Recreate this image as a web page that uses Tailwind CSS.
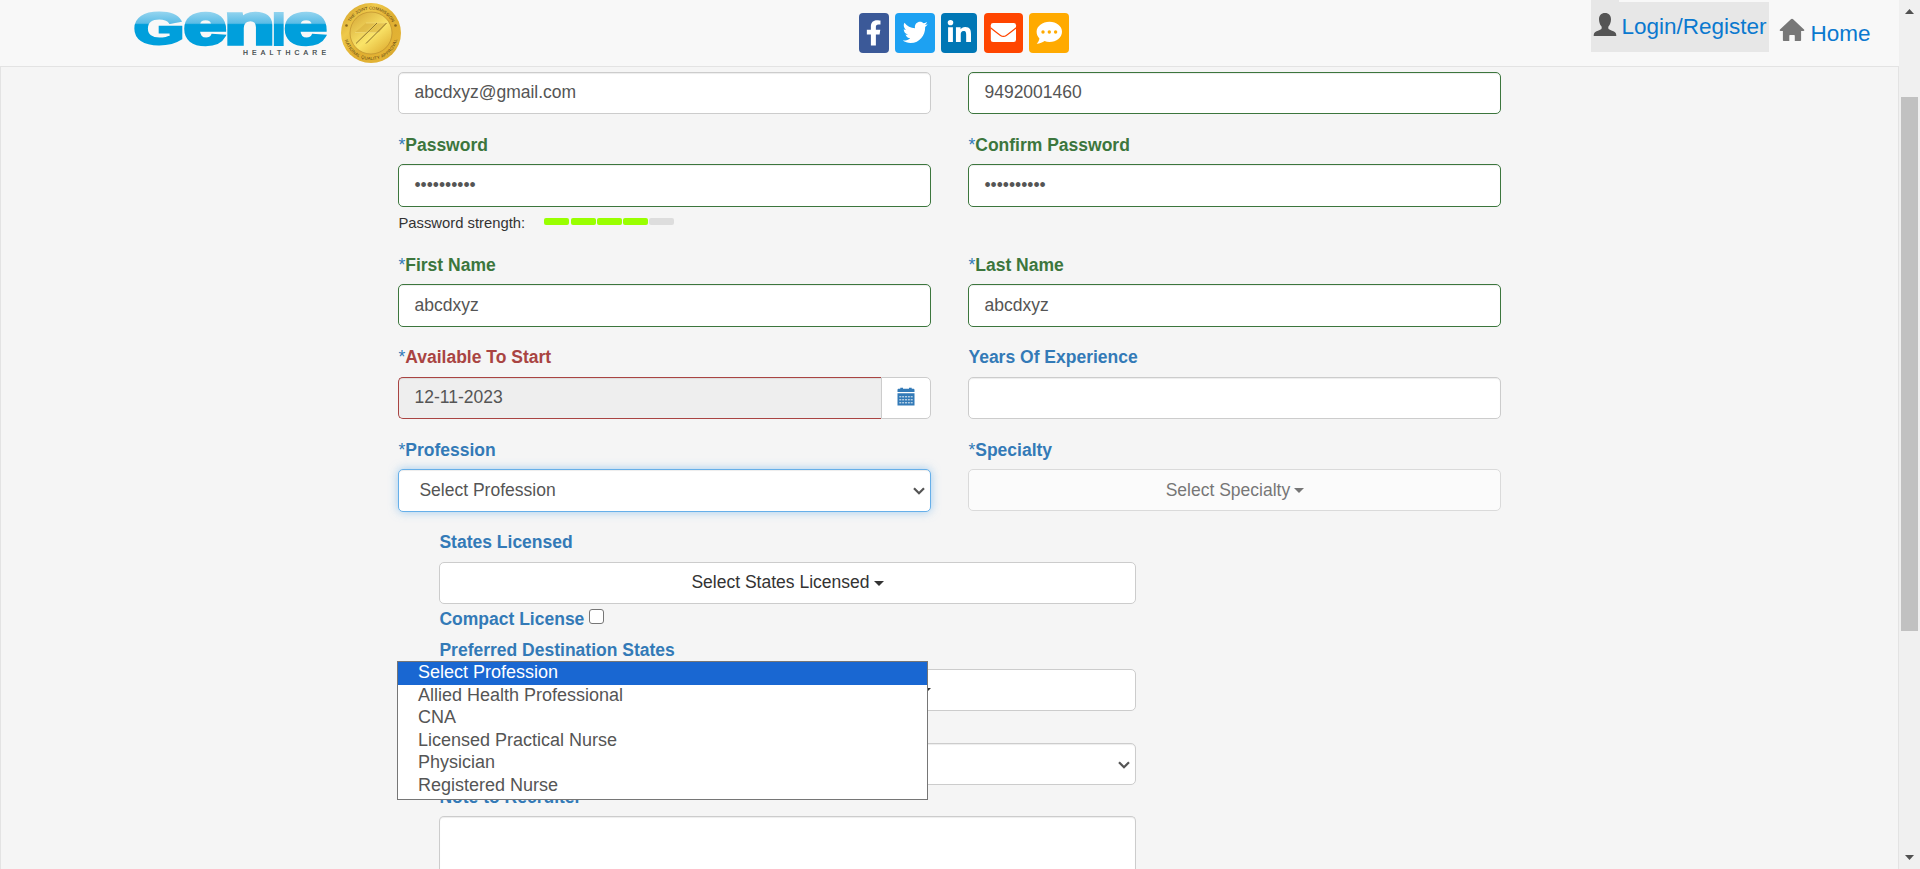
<!DOCTYPE html>
<html lang="en">
<head>
<meta charset="utf-8">
<title>Genie Healthcare</title>
<script src="https://cdn.jsdelivr.net/npm/@tailwindcss/browser@4"></script>
</head>
<body class="h-[869px] overflow-hidden bg-[#f5f5f5] font-['Liberation_Sans',Arial,sans-serif] text-[17.5px] leading-[25px] text-[#333]">
<div class="relative flex h-[869px] w-[1920px]">
  <div class="flex w-[1899px] flex-col">
    <!-- top bar -->
    <header class="flex h-[66px] shrink-0 items-start bg-[#f8f8f8]">
      <div class="flex w-[859px] items-start pl-[134px]">
        <svg class="mt-[10px] h-[50px] w-[196px] overflow-visible" viewBox="134 10 196 50" role="img" aria-label="Genie Healthcare">
          <defs>
            <linearGradient id="blue" gradientUnits="userSpaceOnUse" x1="0" y1="12" x2="0" y2="46">
              <stop offset="0" stop-color="#93d4ef"/><stop offset=".33" stop-color="#5bbce6"/>
              <stop offset=".37" stop-color="#009fdc"/><stop offset="1" stop-color="#009fdc"/>
            </linearGradient>
            <!-- same ramp for the lower-case letters, which are stretched 1.32 times from y = 45 -->
            <linearGradient id="blueTall" gradientUnits="userSpaceOnUse" x1="0" y1="20" x2="0" y2="45.800">
              <stop offset="0" stop-color="#93d4ef"/><stop offset=".33" stop-color="#5bbce6"/>
              <stop offset=".37" stop-color="#009fdc"/><stop offset="1" stop-color="#009fdc"/>
            </linearGradient>
          </defs>
          <g font-family="Liberation Sans" font-weight="700" stroke-linejoin="miter">
            <text x="133.800" y="44.300" font-size="44" textLength="50.500" lengthAdjust="spacingAndGlyphs" fill="url(#blue)" stroke="url(#blue)" stroke-width="2.800">G</text>
            <g transform="translate(0 45) scale(1 1.32) translate(0 -45)" font-size="44" fill="url(#blueTall)" stroke="url(#blueTall)" stroke-width="2.600">
              <text x="183.500" y="44" textLength="43" lengthAdjust="spacingAndGlyphs">e</text>
              <text x="224" y="44.300" textLength="51" lengthAdjust="spacingAndGlyphs">n</text>
              <text x="284" y="44" textLength="43" lengthAdjust="spacingAndGlyphs">e</text>
            </g>
            <text x="271.500" y="44.700" font-size="45.500" textLength="14.500" lengthAdjust="spacingAndGlyphs" fill="url(#blue)" stroke="url(#blue)" stroke-width="2">I</text>
          </g>
          <text x="243" y="54.700" font-family="Liberation Sans" font-size="6.800" textLength="83" lengthAdjust="spacing" fill="#333c40" stroke="#333c40" stroke-width=".2">HEALTHCARE</text>
        </svg>
        <svg class="ml-[10px] mt-[2px] size-[62px]" viewBox="-31 -31 62 62" role="img" aria-label="The Joint Commission National Quality Approval">
          <defs>
            <linearGradient id="rim" x1="0" y1="0" x2="1" y2="1">
              <stop offset="0" stop-color="#cf9c25"/><stop offset=".3" stop-color="#efc94a"/><stop offset=".55" stop-color="#dfae30"/><stop offset=".8" stop-color="#e3b335"/><stop offset="1" stop-color="#c08a1c"/>
            </linearGradient>
            <linearGradient id="face" x1="0" y1="0" x2=".8" y2="1">
              <stop offset="0" stop-color="#d3a333"/><stop offset=".6" stop-color="#fae468"/><stop offset="1" stop-color="#e0b034"/>
            </linearGradient>
            <path id="arcTop" d="M-23.500 0A23.500 23.500 0 0 1 23.500 0"/>
            <path id="arcBottom" d="M-27 0A27 27 0 0 0 27 0"/>
          </defs>
          <circle r="30" fill="url(#rim)"/>
          <circle r="21" fill="url(#face)" stroke="#b5872a" stroke-width=".6"/>
          <path d="M-5-10H4.500L-5.500-.5H-16ZM7-10H16L8-.5H-3Z" fill="#d2a638" opacity=".45"/>
          <path d="M-5-10H17M-16-.5H8" stroke="#f0d873" stroke-width=".8"/>
          <path d="M-15 10.500L6-10M-5 10.500L15.500-10" stroke="#6e5420" stroke-width=".8" fill="none"/>
          <g font-family="Liberation Sans" font-size="4.300" fill="#5c4312">
            <text><textPath href="#arcTop" startOffset="11.500" textLength="51">THE JOINT COMMISSION</textPath></text>
            <text><textPath href="#arcBottom" startOffset="7" textLength="71">NATIONAL QUALITY APPROVAL</textPath></text>
          </g>
          <g fill="#8a661c"><circle cx="-24.500" cy="-7.500" r="1.300"/><circle cx="24.500" cy="-7.500" r="1.300"/></g>
        </svg>
      </div>
      <nav class="flex items-start pt-[13px]" aria-label="Social">
        <svg class="mr-[6px] h-10 w-[30px] rounded-[4px] bg-[#3b5998]" viewBox="0 0 30 40" fill="#fff"><path transform="translate(6.700 7.200) scale(.0498 .0494)" d="M279.140 288l14.220-92.660h-88.910v-60.130c0-25.350 12.420-50.060 52.240-50.060h40.420V6.260S260.430 0 225.360 0c-73.220 0-121.080 44.380-121.080 124.720v70.620H22.890V288h81.390v224h100.170V288z"/></svg>
        <svg class="mr-[6px] h-10 w-10 rounded-[4px] bg-[#1da1f2]" viewBox="0 0 40 40" fill="#fff"><path transform="translate(7.700 6.200) scale(.0488 .0512)" d="M459.370 151.716c.325 4.548.325 9.097.325 13.645 0 138.720-105.583 298.558-298.558 298.558-59.452 0-114.680-17.219-161.137-47.106 8.447.974 16.568 1.299 25.340 1.299 49.055 0 94.213-16.568 130.274-44.832-46.132-.975-84.792-31.188-98.112-72.772 6.498.974 12.995 1.624 19.818 1.624 9.421 0 18.843-1.300 27.614-3.573-48.081-9.747-84.143-51.980-84.143-102.985v-1.299c13.969 7.797 30.214 12.670 47.431 13.319-28.264-18.843-46.781-51.005-46.781-87.391 0-19.492 5.197-37.360 14.294-52.954 51.655 63.675 129.300 105.258 216.365 109.807-1.624-7.797-2.599-15.918-2.599-24.040 0-57.828 46.782-104.934 104.934-104.934 30.213 0 57.502 12.670 76.670 33.137 23.715-4.548 46.456-13.320 66.599-25.340-7.798 24.366-24.366 44.833-46.132 57.827 21.117-2.273 41.584-8.122 60.426-16.243-14.292 20.791-32.161 39.308-52.628 54.253z"/></svg>
        <svg class="mr-[7px] h-10 w-9 rounded-[4px] bg-[#0077b5]" viewBox="0 0 36 40" fill="#fff"><path transform="translate(6.700 7) scale(.052 .049)" d="M100.280 448H7.400V148.900h92.880zM53.790 108.100C24.090 108.100 0 83.500 0 53.800a53.790 53.790 0 0 1 107.580 0c0 29.700-24.100 54.300-53.790 54.300zM447.900 448h-92.680V302.400c0-34.700-.7-79.200-48.290-79.200-48.290 0-55.690 37.700-55.690 76.700V448h-92.780V148.900h89.080v40.800h1.300c12.400-23.500 42.690-48.300 87.880-48.300 94 0 111.280 61.900 111.280 142.300V448z"/></svg>
        <svg class="mr-[6px] h-10 w-[39px] rounded-[4px] bg-[#ff4500]" viewBox="0 0 39 40"><rect x="6.800" y="10" width="25.200" height="19" rx="2.300" fill="#fff"/><path d="M6.500 14.800C10 17.700 13.500 20.300 16.500 22.400c2 1.400 3.800 1.400 5.800 0 3-2.100 6.500-4.700 10-7.600" fill="none" stroke="#ff4500" stroke-width="1.200"/></svg>
        <svg class="h-10 w-10 rounded-[4px] bg-[#ffaa00]" viewBox="0 0 40 40"><path d="M20.500 8.700c7 0 12.500 4.500 12.500 10s-5.500 10.200-12.500 10.200c-1.800 0-3.500-.3-5-.9-1.900 1.400-4.600 2.700-7.800 2.700 1.500-1.700 2.500-3.600 2.700-5.300C8.800 23.600 7.600 21.300 7.600 18.700c0-5.500 5.900-10 12.900-10z" fill="#fff"/><g fill="#ffaa00"><circle cx="14" cy="19" r="1.700"/><circle cx="20.300" cy="19" r="1.700"/><circle cx="26.600" cy="19" r="1.700"/></g></svg>
      </nav>
      <nav class="ml-auto flex items-start pr-[28.5px] text-[22.5px] text-[#0b79cf]">
        <div class="h-[52px] w-7 bg-[#e7e7e7] pl-[2px] pt-3">
          <svg class="h-6 w-6" viewBox="0 0 24 24" fill="#555"><path d="M12 1c3.800 0 6.100 2.600 6 6.500-.1 2.700-.9 5.100-2.400 6.800-.5.6-.5 2.600.3 3 2 1.100 4.300 1.700 5.800 2.700 1.200.8 1.600 2.200 1.600 4H.7c0-1.800.4-3.200 1.600-4 1.500-1 3.800-1.600 5.800-2.700.8-.4.8-2.400.3-3C6.900 12.600 6.100 10.200 6 7.500 5.900 3.600 8.200 1 12 1z"/></svg>
        </div>
        <a class="mt-[2px] h-[50px] w-[150px] bg-[#e7e7e7] pl-[2px] pt-[13px] leading-[23px]">Login/Register</a>
        <svg class="ml-[10px] mt-[18px] h-6 w-[26px]" viewBox="0 0 26 24" fill="#777"><path d="M13 .8c.4 0 .8.200 1.100.5L25 11.600c.6.600.3 1.400-.5 1.400h-2.400v9c0 .7-.4 1.100-1.100 1.100h-5.200V18c0-.7-.3-1-1-1h-3.500c-.7 0-1 .3-1 1v5.100H5c-.7 0-1.100-.4-1.100-1.100v-9H1.500c-.8 0-1.100-.8-.5-1.400L11.900 1.300c.3-.3.7-.5 1.100-.5z"/></svg>
        <a class="ml-[5px] mt-[22px] leading-[23px]">Home</a>
      </nav>
    </header>

    <!-- registration form -->
    <main class="flex h-[803px] flex-col border-x border-t border-[#e3e3e3] pl-[397.45px] pt-[5px]">
      <div class="grid w-[1103px] grid-cols-2 gap-x-[37px]">
        <div class="h-[42px] rounded-[5px] border border-[#ccc] bg-white px-[15px] pt-[7px] text-[#555] shadow-[inset_0_1px_1px_rgba(0,0,0,.075)]">abcdxyz@gmail.com</div>
        <div class="h-[42px] rounded-[5px] border border-[#3c763d] bg-white px-[15px] pt-[7px] text-[#555] shadow-[inset_0_1px_1px_rgba(0,0,0,.075)]">9492001460</div>
      </div>

      <div class="mt-[19px] grid h-[120px] w-[1103px] shrink-0 grid-cols-2 gap-x-[37px]">
        <div>
          <div class="font-bold text-[#3c763d]"><span class="font-normal text-[#337ab7]">*</span>Password</div>
          <div class="mt-[6px] h-[43px] rounded-[5px] border border-[#3c763d] bg-white px-[15px] pt-2 text-[#555] shadow-[inset_0_1px_1px_rgba(0,0,0,.075)]">••••••••••</div>
          <div class="flex text-[14.8px] leading-[21px]">
            <span class="w-[145.6px] pt-[6px]">Password strength:</span>
            <div class="flex gap-px pt-[11px]">
              <i class="h-[7px] w-[25px] rounded-[2px] bg-[#9f0]"></i>
              <i class="ml-px h-[7px] w-[25px] rounded-[2px] bg-[#9f0]"></i>
              <i class="h-[7px] w-[25px] rounded-[2px] bg-[#9f0]"></i>
              <i class="h-[7px] w-[25px] rounded-[2px] bg-[#9f0]"></i>
              <i class="h-[7px] w-[25px] rounded-[2px] bg-[#ddd]"></i>
            </div>
          </div>
        </div>
        <div>
          <div class="font-bold text-[#3c763d]"><span class="font-normal text-[#337ab7]">*</span>Confirm Password</div>
          <div class="mt-[6px] h-[43px] rounded-[5px] border border-[#3c763d] bg-white px-[15px] pt-2 text-[#555] shadow-[inset_0_1px_1px_rgba(0,0,0,.075)]">••••••••••</div>
        </div>
      </div>

      <div class="grid h-[92px] w-[1103px] shrink-0 grid-cols-2 gap-x-[37px]">
        <div>
          <div class="font-bold text-[#3c763d]"><span class="font-normal text-[#337ab7]">*</span>First Name</div>
          <div class="mt-[6px] h-[43px] rounded-[5px] border border-[#3c763d] bg-white px-[15px] pt-2 text-[#555] shadow-[inset_0_1px_1px_rgba(0,0,0,.075)]">abcdxyz</div>
        </div>
        <div>
          <div class="font-bold text-[#3c763d]"><span class="font-normal text-[#337ab7]">*</span>Last Name</div>
          <div class="mt-[6px] h-[43px] rounded-[5px] border border-[#3c763d] bg-white px-[15px] pt-2 text-[#555] shadow-[inset_0_1px_1px_rgba(0,0,0,.075)]">abcdxyz</div>
        </div>
      </div>

      <div class="grid h-[93px] w-[1103px] shrink-0 grid-cols-2 gap-x-[37px]">
        <div>
          <div class="font-bold text-[#a94442]"><span class="font-normal text-[#337ab7]">*</span>Available To Start</div>
          <div class="mt-[7px] flex h-[42px]">
            <div class="w-[483px] rounded-l-[5px] border border-r-0 border-[#a94442] bg-[#eee] px-[15px] pt-[7px] text-[#555] shadow-[inset_0_1px_1px_rgba(0,0,0,.075)]">12-11-2023</div>
            <div class="flex w-[50px] justify-center rounded-r-[5px] border border-[#ccc] bg-white pt-[9px]">
              <svg class="h-[19px] w-[18px]" viewBox="0 0 18 19"><path d="M.5 5V3c0-.8.500-1.300 1.300-1.300h1.500V.7h2.700v1h6V.7h2.700v1h1.500c.8 0 1.300.5 1.300 1.300v2zM.5 6.300h17v12.200h-17z" fill="#337ab7"/><path d="M2.300 9.800h13.500M2.300 12.800h13.500M2.300 15.800h13.500" stroke="#fff" stroke-width=".9" stroke-dasharray="2 .85"/></svg>
            </div>
          </div>
        </div>
        <div>
          <div class="font-bold text-[#337ab7]">Years Of Experience</div>
          <div class="mt-[7px] h-[42px] rounded-[5px] border border-[#ccc] bg-white shadow-[inset_0_1px_1px_rgba(0,0,0,.075)]"></div>
        </div>
      </div>

      <div class="grid h-[92px] w-[1103px] shrink-0 grid-cols-2 gap-x-[37px]">
        <div>
          <div class="font-bold text-[#337ab7]"><span class="font-normal">*</span>Profession</div>
          <div class="mt-[6px] flex h-[43px] justify-between rounded-[5px] border border-[#66afe9] bg-white pl-5 pr-[5px] pt-2 text-[#555] shadow-[inset_0_1px_1px_rgba(0,0,0,.075),0_0_10px_rgba(102,175,233,.6)]">
            <span>Select Profession</span>
            <svg class="mt-[9px] h-2 w-[12px]" viewBox="0 0 12 8" fill="none" stroke="#555" stroke-width="2.200"><path d="M1 1.200L6 6.300l5-5.100"/></svg>
          </div>
        </div>
        <div>
          <div class="font-bold text-[#337ab7]"><span class="font-normal">*</span>Specialty</div>
          <div class="mt-[6px] flex h-[42px] justify-center rounded-[5px] border border-[#ccc] bg-white pt-2 opacity-65">
            <span>Select Specialty</span><span class="ml-[4px] mt-[10px] h-0 border-x-[5px] border-t-[5px] border-x-transparent border-t-[#333]"></span>
          </div>
        </div>
      </div>

      <div class="ml-[41px] flex w-[697px] flex-col">
        <div class="font-bold text-[#337ab7]">States Licensed</div>
        <div class="mt-[7px] flex h-[42px] justify-center rounded-[5px] border border-[#ccc] bg-white pt-[7px]">
          <span>Select States Licensed</span><span class="ml-[5px] mt-[11px] h-0 border-x-[5px] border-t-[5px] border-x-transparent border-t-[#333]"></span>
        </div>
        <div class="mt-[3px] flex h-[31px] font-bold text-[#337ab7]"><span>Compact License</span><span class="ml-[5px] mt-[2px] size-[15px] rounded-[3px] border border-[#767676] bg-white"></span></div>
        <div class="h-[31px] font-bold text-[#337ab7]">Preferred Destination States</div>
        <div class="flex h-[42px] justify-center rounded-[5px] border border-[#ccc] bg-white pr-[2px] pt-[7px]">
          <span>Select Preferred Destination States</span><span class="ml-[4px] mt-[11px] h-0 border-x-[5px] border-t-[5px] border-x-transparent border-t-[#333]"></span>
        </div>
        <div class="mt-8 flex h-[42px] justify-end rounded-[5px] border border-[#ccc] bg-white pr-[5px] pt-[17px] shadow-[inset_0_1px_1px_rgba(0,0,0,.075)]">
          <svg class="h-2 w-[12px]" viewBox="0 0 12 8" fill="none" stroke="#555" stroke-width="2.200"><path d="M1 1.200L6 6.300l5-5.100"/></svg>
        </div>
        <div class="h-[31px] font-bold text-[#337ab7]">Note to Recruiter</div>
        <div class="h-[53px] rounded-t-[5px] border border-b-0 border-[#ccc] bg-white shadow-[inset_0_1px_1px_rgba(0,0,0,.075)]"></div>
      </div>
    </main>
  </div>

  <!-- page scrollbar -->
  <div class="flex h-[869px] w-[21px] flex-col items-center bg-[#f0f0f0]">
    <svg class="mt-[9px] h-[5px] w-[9px]" viewBox="0 0 9 5" fill="#505050"><path d="M0 5L4.500 0 9 5z"/></svg>
    <div class="mt-[83px] h-[534px] w-[17px] bg-[#c1c1c1]"></div>
    <svg class="mt-[224px] h-[5px] w-[9px]" viewBox="0 0 9 5" fill="#505050"><path d="M0 0L4.500 5 9 0z"/></svg>
  </div>

  <!-- open list of the profession select -->
  <ul class="absolute left-[397px] top-[661px] h-[139px] w-[531px] border border-[#767676] bg-white text-[18px] leading-[20px] text-[#555]">
    <li class="h-[23px] bg-[#1967d2] pl-5 text-white">Select Profession</li>
    <li class="h-[22px] pl-5">Allied Health Professional</li>
    <li class="h-[23px] pl-5">CNA</li>
    <li class="h-[22px] pl-5">Licensed Practical Nurse</li>
    <li class="h-[23px] pl-5">Physician</li>
    <li class="h-[22px] pl-5">Registered Nurse</li>
  </ul>
</div>
</body>
</html>
